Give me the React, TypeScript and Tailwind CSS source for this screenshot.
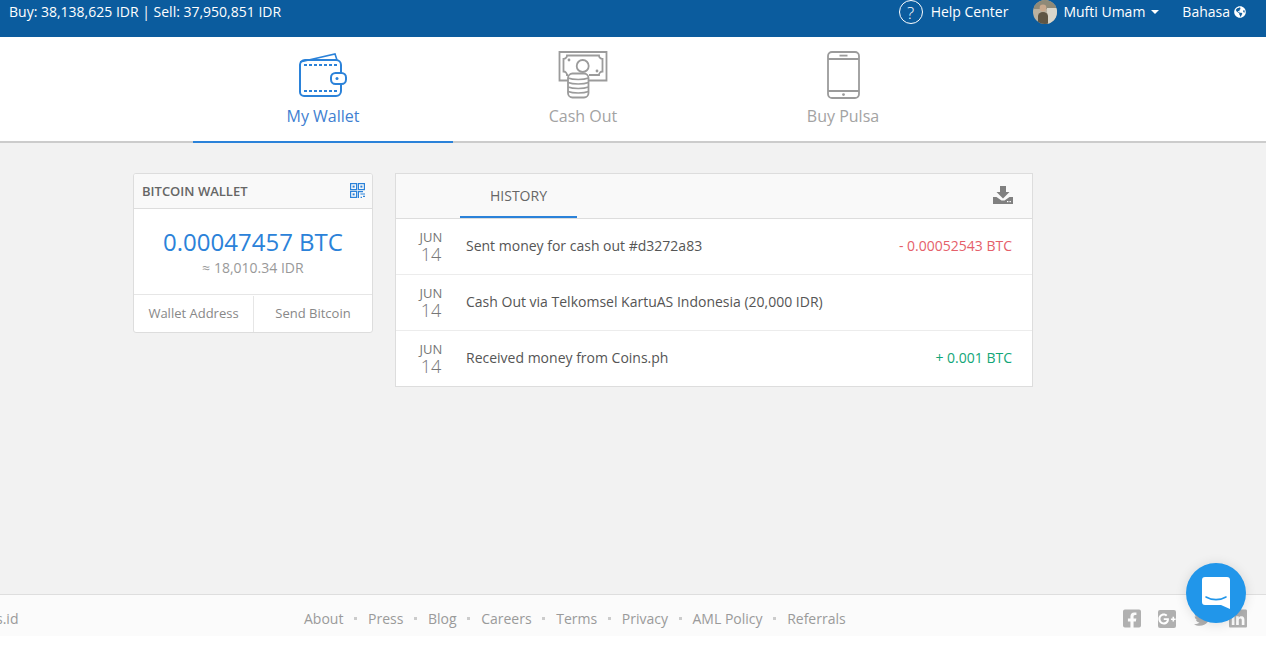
import React from "react";
import { FaFacebookSquare, FaTwitter, FaLinkedin, FaGlobeAmericas, FaGooglePlusG } from "react-icons/fa";

const Wallet = () => (
  <svg width="50" height="46" viewBox="0 0 50 46" fill="none" stroke="#2b82d9" strokeWidth="2" className="mt-[2px]">
    <path d="M2 9 L37 1 L39 7" strokeWidth="1.6" />
    <path d="M43 20 V12 a5 5 0 0 0 -5 -5 H7 a5 5 0 0 0 -5 5 V39 a4 4 0 0 0 4 4 H38 a5 5 0 0 0 5 -5 V31" />
    <path d="M6 12 H40 M6 38 H40" strokeDasharray="3 2" strokeWidth="1.8" />
    <rect x="33" y="20" width="15" height="11" rx="4.5" />
    <circle cx="39" cy="25.5" r="1.5" fill="#2b82d9" stroke="none" />
  </svg>
);

const Cash = () => (
  <svg width="50" height="48" viewBox="0 0 50 48" fill="none" stroke="#9b9b9b" strokeWidth="1.8">
    <path d="M10 29.5 H1.5 V1 H48.5 V29.5 H31" />
    <path d="M10 24 H9 a3.5 3.5 0 0 0 -3.5 -3.5 V8 a3.5 3.5 0 0 0 3.5 -3.5 H41 a3.5 3.5 0 0 0 3.5 3.5 V20.5 a3.5 3.5 0 0 0 -3.5 3.5 H31" />
    <circle cx="24.7" cy="15" r="6" />
    <circle cx="11" cy="9" r="1.4" fill="#9b9b9b" stroke="none" />
    <circle cx="39" cy="20" r="1.4" fill="#9b9b9b" stroke="none" />
    <rect x="10" y="22.5" width="20.5" height="24" rx="4.5" fill="#fff" />
    <path d="M10 27 c5 2 15.5 2 20.5 0 M10 31.5 c5 2 15.5 2 20.5 0 M10 36 c5 2 15.5 2 20.5 0 M10 40.5 c5 2 15.5 2 20.5 0" strokeWidth="1.5" />
  </svg>
);

const Phone = () => (
  <svg width="33" height="48" viewBox="0 0 33 48" fill="none" stroke="#9b9b9b" strokeWidth="1.8">
    <rect x="1" y="1" width="31" height="46" rx="4" />
    <path d="M1 8 H32 M1 40 H32" />
    <path d="M12.5 4.6 H20.5" />
    <circle cx="16.5" cy="43.6" r="1.4" fill="#9b9b9b" stroke="none" />
  </svg>
);

const Qr = () => (
  <svg width="15" height="15" viewBox="0 0 15 15" fill="none" stroke="#2b82d9" strokeWidth="1.2" className="-mt-[2px]">
    <rect x="0.6" y="0.6" width="6" height="6" />
    <rect x="8.4" y="0.6" width="6" height="6" />
    <rect x="0.6" y="8.4" width="6" height="6" />
    <rect x="2.6" y="2.6" width="2" height="2" fill="#2b82d9" stroke="none" />
    <rect x="10.4" y="2.6" width="2" height="2" fill="#2b82d9" stroke="none" />
    <rect x="2.6" y="10.4" width="2" height="2" fill="#2b82d9" stroke="none" />
    <path d="M8.4 15 V8.6 H13 M10.4 11 H15 M13 13.4 H15 M10.6 14.4 H12" />
  </svg>
);

const Download = () => (
  <svg width="20" height="18" viewBox="0 0 20 18" fill="#808080" className="-mt-[2px]">
    <path d="M7 0 H13 V6 H16.5 L10 12.5 L3.5 6 H7 Z" />
    <path d="M0 11 H3.5 L8.5 14.5 H11.5 L16.5 11 H20 V18 H0 Z" />
    <rect x="14" y="15" width="1.4" height="1.2" fill="#fff" />
    <rect x="16.5" y="15" width="1.4" height="1.2" fill="#fff" />
  </svg>
);

const Avatar = () => (
  <svg width="24" height="24" viewBox="0 0 24 24" className="block rounded-full">
    <rect width="24" height="24" fill="#b9b1a0" />
    <rect y="0" width="24" height="9" fill="#8f8a78" />
    <rect x="14" y="8" width="10" height="16" fill="#d9d6cb" />
    <circle cx="10" cy="8" r="3.4" fill="#c9a98d" />
    <path d="M5 24 V16 a5 4 0 0 1 10 0 V24 Z" fill="#5f5645" />
  </svg>
);

const tabs = [
  { label: "My Wallet", icon: <Wallet />, active: true },
  { label: "Cash Out", icon: <Cash />, active: false },
  { label: "Buy Pulsa", icon: <Phone />, active: false },
];

const rows = [
  { text: "Sent money for cash out #d3272a83", amount: "- 0.00052543 BTC", color: "text-[#e5606a]" },
  { text: "Cash Out via Telkomsel KartuAS Indonesia (20,000 IDR)", amount: "", color: "" },
  { text: "Received money from Coins.ph", amount: "+ 0.001 BTC", color: "text-[#12a678]" },
];

const links = ["About", "Press", "Blog", "Careers", "Terms", "Privacy", "AML Policy", "Referrals"];

export default function App() {
  return (
    <div className="relative flex h-[646px] flex-col overflow-hidden bg-white font-['Open_Sans',sans-serif] text-[14px] text-[#555]">
      <header className="flex h-[37px] shrink-0 items-start justify-between bg-[#0b5c9e] text-[14px] leading-[24px] text-white">
        <div className="pl-[9px]">Buy: 38,138,625 IDR | Sell: 37,950,851 IDR</div>
        <div className="flex items-center pr-[20px]">
          <span className="flex h-[24px] w-[24px] items-center justify-center rounded-full border border-white text-[17px] font-light leading-none">?</span>
          <span className="ml-[8px]">Help Center</span>
          <span className="ml-[25px]"><Avatar /></span>
          <span className="ml-[6px]">Mufti Umam</span>
          <span className="ml-[6px] h-0 w-0 border-x-[4px] border-t-[4px] border-x-transparent border-t-white" />
          <span className="ml-[23px]">Bahasa</span>
          <FaGlobeAmericas className="ml-[4px] text-[12px]" />
        </div>
      </header>

      <nav className="flex h-[106px] shrink-0 border-b-2 border-[#cccccc] bg-white pl-[193px]">
        {tabs.map((t) => (
          <div
            key={t.label}
            className={`-mb-[2px] flex h-[106px] w-[260px] flex-col items-center border-b-2 ${t.active ? "border-[#2b82d9] text-[#3f7fd1]" : "border-transparent text-[#a3a3a3]"}`}
          >
            <div className="mt-[14px] flex h-[48px] items-start justify-center">{t.icon}</div>
            <div className="mt-[6px] text-[16px] leading-[22px]">{t.label}</div>
          </div>
        ))}
      </nav>

      <main className="flex flex-1 items-start gap-[22px] bg-[#f2f2f2] pl-[133px] pt-[30px]">
        <section className="w-[240px] overflow-hidden rounded-[3px] border border-[#dddddd] bg-white">
          <div className="flex h-[35px] items-center justify-between border-b border-[#dddddd] bg-[#f9f9f9] pl-[8px] pr-[7px]">
            <span className="mt-[1px] text-[13px] font-semibold text-[#666]">BITCOIN WALLET</span>
            <Qr />
          </div>
          <div className="flex h-[85px] flex-col items-center pt-[18px]">
            <div className="text-[24px] leading-[30px] text-[#2b82d9]">0.00047457 BTC</div>
            <div className="mt-[1px] text-[14px] leading-[20px] text-[#999]">≈ 18,010.34 IDR</div>
          </div>
          <div className="flex h-[38px] border-t border-[#e6e6e6] pt-[1px] text-[13px] text-[#888]">
            <div className="flex w-[120px] items-center justify-center border-r border-[#e6e6e6]">Wallet Address</div>
            <div className="flex flex-1 items-center justify-center">Send Bitcoin</div>
          </div>
        </section>

        <section className="w-[638px] border border-[#dddddd] bg-white">
          <div className="flex h-[45px] items-start justify-between border-b border-[#dddddd] bg-[#f9f9f9] pl-[64px] pr-[19px]">
            <div className="flex h-[44px] w-[117px] items-center justify-center border-b-2 border-[#2b82d9] text-[14px] text-[#666]">HISTORY</div>
            <div className="flex h-[44px] items-center"><Download /></div>
          </div>
          {rows.map((r, i) => (
            <div key={i} className={`flex items-center pr-[20px] ${i > 0 ? "h-[56px] border-t border-[#ececec]" : "h-[55px]"}`}>
              <div className="flex w-[70px] flex-col items-center text-[#777]">
                <span className="text-[13px] leading-[13px]">JUN</span>
                <span className="mt-[1px] text-[18px] font-light leading-[18px]">14</span>
              </div>
              <div className="-mt-[3px] flex-1 text-[#555]">{r.text}</div>
              <div className={`-mt-[3px] text-[14px] ${r.color}`}>{r.amount}</div>
            </div>
          ))}
        </section>
      </main>

      <footer className="relative mb-[10px] flex h-[42px] shrink-0 items-center border-t border-[#dedede] bg-[#fbfbfb] pt-[6px] text-[14px] text-[#9a9a9a]">
        <span className="-ml-[4px] w-[308px]">s.id</span>
        <div className="flex items-center">
          {links.map((l, i) => (
            <React.Fragment key={l}>
              {i > 0 && <span className="mx-[10.8px] h-[3px] w-[3px] bg-[#cccccc]" />}
              <span>{l}</span>
            </React.Fragment>
          ))}
        </div>
        <div className="ml-auto flex items-center gap-[17.5px] pr-[19px] text-[21px] text-[#b0b0b0]">
          <FaFacebookSquare className="w-[18px]" />
          <span className="flex h-[18px] w-[18px] items-center justify-center rounded-[2px] bg-[#b0b0b0] text-[18px] text-white"><FaGooglePlusG /></span>
          <FaTwitter className="w-[18px]" />
          <FaLinkedin className="w-[18px]" />
        </div>
      </footer>

      <div className="absolute left-[1186px] top-[563px] flex h-[60px] w-[60px] items-center justify-center rounded-full bg-[#2196ea] shadow-[0_1px_12px_rgba(0,0,0,0.12)]">
        <svg width="28" height="32" viewBox="0 0 28 32">
          <path d="M3 0 H25 a3 3 0 0 1 3 3 V32 L19 28 H3 a3 3 0 0 1 -3 -3 V3 a3 3 0 0 1 3 -3 Z" fill="#fff" />
          <path d="M4 20 C10 23.5 18 23.5 24 20" fill="none" stroke="#2196ea" strokeWidth="1.6" strokeLinecap="round" />
        </svg>
      </div>
    </div>
  );
}
